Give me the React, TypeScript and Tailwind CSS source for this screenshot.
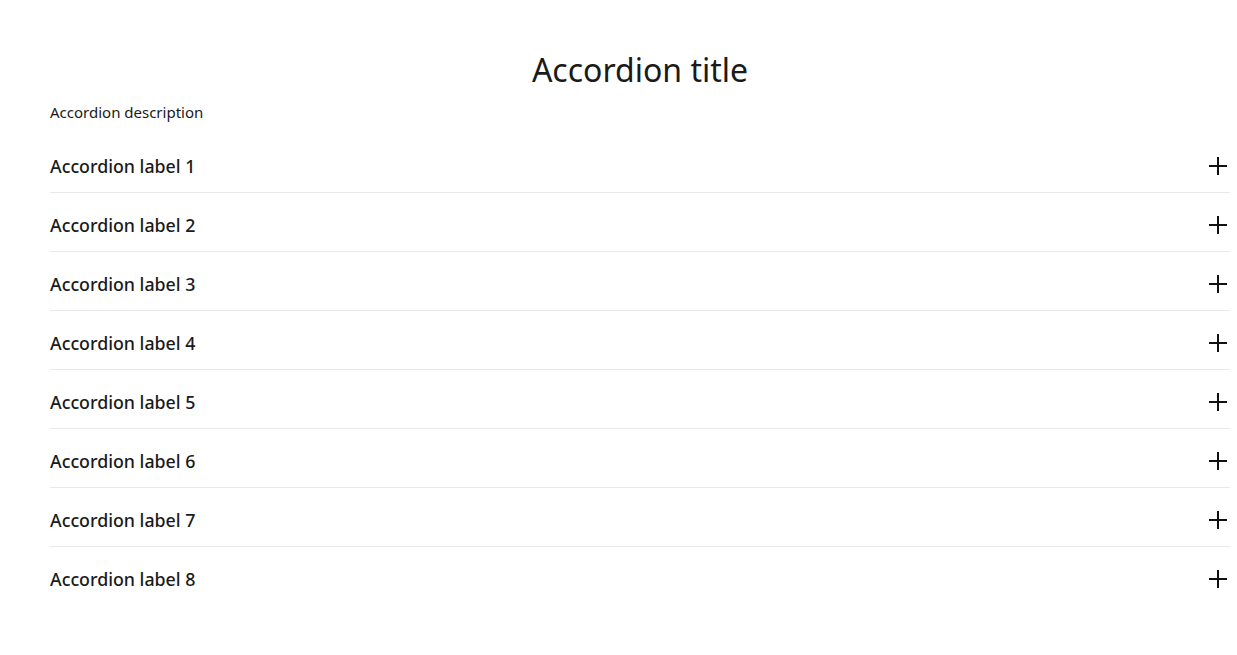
const labels = [1, 2, 3, 4, 5, 6, 7, 8];

function PlusIcon() {
  return (
    <svg width="18" height="18" viewBox="0 0 18 18" fill="none" stroke="#111" strokeWidth={2}>
      <path d="M9 0v18M0 9h18" />
    </svg>
  );
}

export default function App() {
  return (
    <div className="min-h-screen bg-white pt-[50px] pl-[50px] pr-[7px] font-['Noto_Sans',sans-serif] text-[#1a1a1a]">
      <h1 className="text-center text-[32px] leading-[40px] font-normal">Accordion title</h1>
      <p className="mt-[10px] text-[15px] leading-[24px]">Accordion description</p>
      <div className="mt-[10px]">
        {labels.map((n, i) => (
          <button
            key={n}
            className={`flex w-full items-center justify-between pt-[20px] pb-[14px] text-left ${
              i < labels.length - 1 ? 'border-b border-[#e8e8e8]' : ''
            }`}
          >
            <span className="text-[17.8px] leading-[24px] font-medium">Accordion label {n}</span>
            <span className="mr-[3px]">
              <PlusIcon />
            </span>
          </button>
        ))}
      </div>
    </div>
  );
}
